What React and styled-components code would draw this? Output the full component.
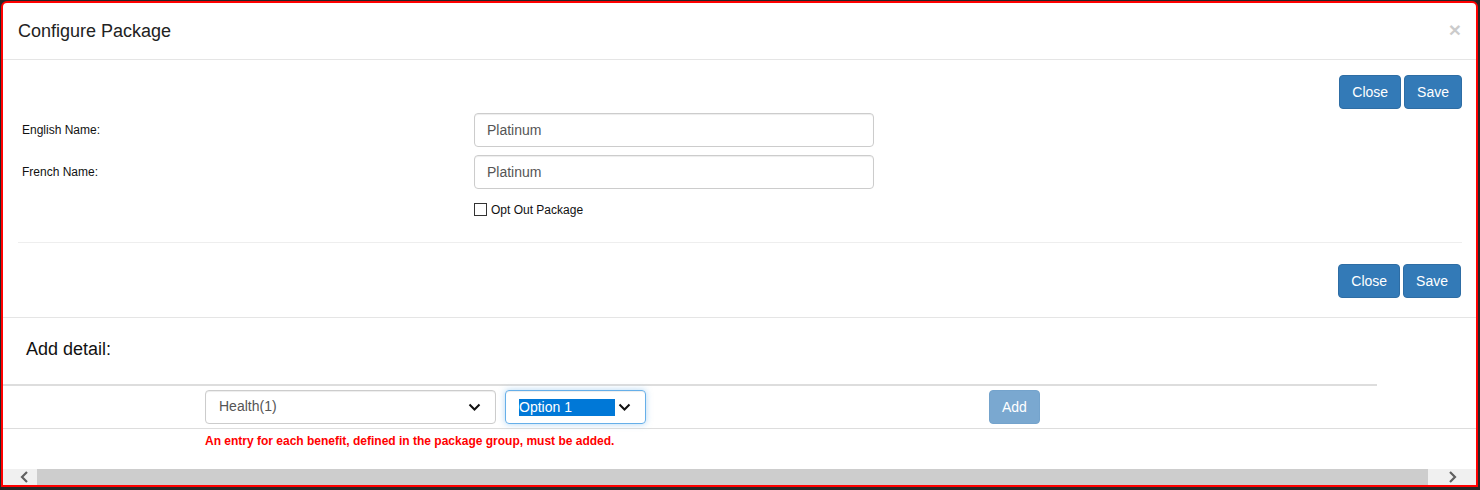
import React from 'react'
import styled, { createGlobalStyle } from 'styled-components'

const GlobalStyle = createGlobalStyle`
    html, body {
        margin: 0;
        padding: 0;
        background: #262626;
        overflow: hidden;
    }
    body {
        font-family: "Liberation Sans", Arial, Helvetica, sans-serif;
        font-size: 14px;
        line-height: 1.42857;
        color: #333;
    }
    * { box-sizing: border-box; }
`

const Modal = styled.div`
    margin: 1px 0 0 1px;
    width: 1477px;
    height: 486px;
    background: #fff;
    border: 2px solid #f00;
    border-radius: 6px 6px 0 0;
    display: flex;
    flex-direction: column;
    overflow: hidden;
`
const Header = styled.div`
    display: flex;
    justify-content: space-between;
    align-items: flex-start;
    padding: 15px;
    height: 57px;
    border-bottom: 1px solid #e5e5e5;
`
const Title = styled.h4`
    margin: 0;
    font-size: 18px;
    font-weight: normal;
    line-height: 26px;
    color: #222;
`
const CloseX = styled.span`
    font-size: 21px;
    font-weight: bold;
    line-height: 1;
    color: #000;
    opacity: 0.2;
    margin-top: 1px;
`
const Body = styled.div`
    padding: 15px 14px 19px 15px;
    border-bottom: 1px solid #e5e5e5;
`
const ButtonBar = styled.div`
    display: flex;
    justify-content: flex-end;
    gap: 3px;
    padding-right: ${p => p.shift || 0}px;
`
const Button = styled.button`
    font-family: inherit;
    font-size: 14px;
    line-height: 20px;
    height: 34px;
    padding: 6px 12px;
    color: #fff;
    background: ${p => (p.disabled ? '#7aa8d0' : '#337ab7')};
    border: 1px solid ${p => (p.disabled ? '#74a3cc' : '#2e6da4')};
    border-radius: 4px;
    cursor: ${p => (p.disabled ? 'not-allowed' : 'pointer')};
`
const Form = styled.div`
    display: flex;
    flex-direction: column;
    gap: 8px;
    margin-top: 4px;
    padding-left: 4px;
`
const FormRow = styled.div`
    display: grid;
    grid-template-columns: 452px 400px;
    align-items: center;
`
const Label = styled.label`
    font-size: 12px;
    color: #111;
    padding-top: 2px;
`
const Input = styled.input`
    font-family: inherit;
    font-size: 14px;
    height: 34px;
    padding: 6px 12px;
    color: #555;
    border: 1px solid #ccc;
    border-radius: 4px;
    box-shadow: inset 0 1px 1px rgba(0, 0, 0, 0.075);
    outline: none;
`
const CheckRow = styled.div`
    display: flex;
    align-items: center;
    gap: 4px;
    height: 20px;
    margin-top: 2px;
    padding-left: 452px;
    font-size: 12px;
    color: #111;
`
const CheckBox = styled.span`
    width: 13px;
    height: 13px;
    border: 1px solid #333;
    background: #fff;
`
const CheckText = styled.span`
    padding-top: 3px;
`
const Divider = styled.hr`
    margin: 23px 0 21px;
    border: 0;
    border-top: 1px solid #eee;
`
const DetailSection = styled.div`
    padding-top: 18px;
`
const DetailTitle = styled.h4`
    margin: 0 0 22px 23px;
    font-size: 18px;
    font-weight: normal;
    line-height: 26px;
    color: #111;
`
const TableHead = styled.div`
    width: 1374px;
    border-bottom: 2px solid #ddd;
`
const TableRow = styled.div`
    display: flex;
    align-items: center;
    padding: 4px 0 4px 202px;
    border-bottom: 1px solid #ddd;
`
const SelectBox = styled.div`
    display: flex;
    align-items: center;
    justify-content: space-between;
    width: ${p => p.width}px;
    height: 34px;
    margin-right: ${p => p.gapAfter || 0}px;
    padding: 0 14px 0 13px;
    font-size: 14px;
    color: #555;
    border: 1px solid ${p => (p.focused ? '#66afe9' : '#ccc')};
    border-radius: 4px;
    box-shadow: ${p =>
        p.focused
            ? 'inset 0 1px 1px rgba(0,0,0,.075), 0 0 6px rgba(102,175,233,.5)'
            : 'inset 0 1px 1px rgba(0,0,0,.075)'};
`
const Selected = styled.span`
    display: inline-block;
    width: 96px;
    line-height: 17px;
    background: #0078d7;
    color: #fff;
`
const ErrorText = styled.div`
    margin: 4px 0 0 202px;
    font-size: 12px;
    font-weight: bold;
    color: #f00;
`
const ScrollBar = styled.div`
    margin-top: auto;
    height: 16px;
    display: grid;
    grid-template-columns: 34px 1fr 48px;
    background: #f0f0f0;
`
const ScrollButton = styled.div`
    display: flex;
    align-items: center;
    justify-content: ${p => (p.side === 'left' ? 'flex-start' : 'center')};
    padding-left: ${p => (p.side === 'left' ? 17 : 0)}px;
`
const Thumb = styled.div`
    background: #cdcdcd;
`

const Chevron = () => (
    <svg width="13" height="8" viewBox="0 0 13 8">
        <path d="M1.5 1.5 L6.5 6.5 L11.5 1.5" fill="none" stroke="#111" strokeWidth="2" />
    </svg>
)

const ScrollArrow = ({ dir }) => (
    <svg width="9" height="12" viewBox="0 0 9 12">
        <path
            d={dir === 'left' ? 'M7 1 L2 6 L7 11' : 'M2 1 L7 6 L2 11'}
            fill="none"
            stroke="#606060"
            strokeWidth="2.2"
        />
    </svg>
)

const Actions = ({ shift }) => (
    <ButtonBar shift={shift}>
        <Button>Close</Button>
        <Button>Save</Button>
    </ButtonBar>
)

export default function App() {
    return (
        <>
            <GlobalStyle />
            <Modal>
                <Header>
                    <Title>Configure Package</Title>
                    <CloseX>×</CloseX>
                </Header>
                <Body>
                    <Actions />
                    <Form>
                        <FormRow>
                            <Label>English Name:</Label>
                            <Input defaultValue="Platinum" />
                        </FormRow>
                        <FormRow>
                            <Label>French Name:</Label>
                            <Input defaultValue="Platinum" />
                        </FormRow>
                        <CheckRow>
                            <CheckBox />
                            <CheckText>Opt Out Package</CheckText>
                        </CheckRow>
                    </Form>
                    <Divider />
                    <Actions shift={1} />
                </Body>
                <DetailSection>
                    <DetailTitle>Add detail:</DetailTitle>
                    <TableHead />
                    <TableRow>
                        <SelectBox width={291} gapAfter={9}>
                            Health(1)
                            <Chevron />
                        </SelectBox>
                        <SelectBox width={141} gapAfter={343} focused>
                            <Selected>Option 1</Selected>
                            <Chevron />
                        </SelectBox>
                        <Button disabled>Add</Button>
                    </TableRow>
                    <ErrorText>An entry for each benefit, defined in the package group, must be added.</ErrorText>
                </DetailSection>
                <ScrollBar>
                    <ScrollButton side="left">
                        <ScrollArrow dir="left" />
                    </ScrollButton>
                    <Thumb />
                    <ScrollButton side="right">
                        <ScrollArrow dir="right" />
                    </ScrollButton>
                </ScrollBar>
            </Modal>
        </>
    )
}
